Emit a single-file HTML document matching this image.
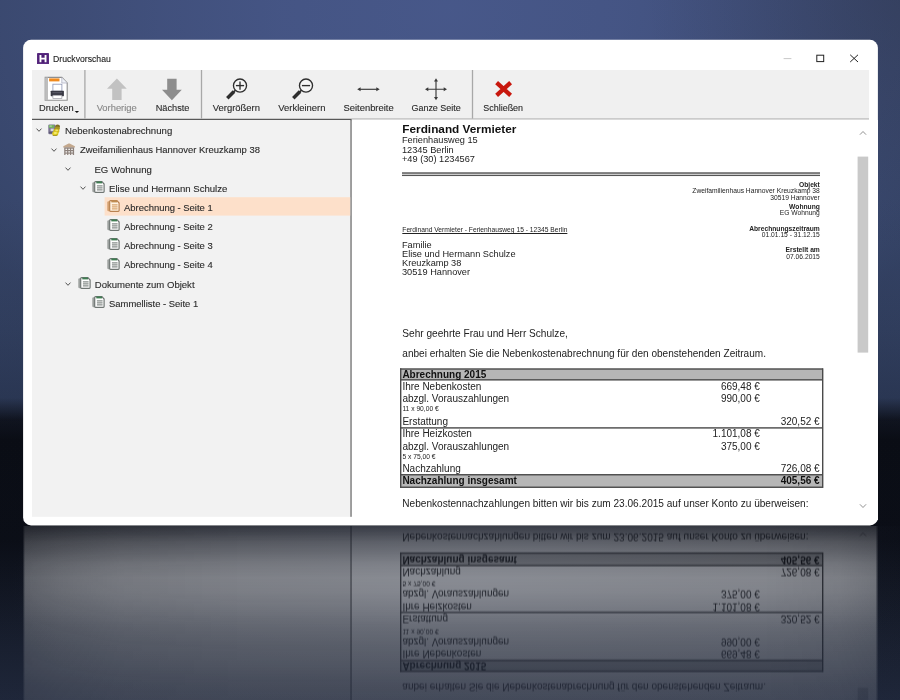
<!DOCTYPE html>
<html lang="de"><head><meta charset="utf-8"><title>Druckvorschau</title>
<style>
html,body{margin:0;padding:0}
body{width:900px;height:700px;overflow:hidden;background:#0a0c12;font-family:"Liberation Sans", sans-serif;font-size:0;line-height:0}
#stage{position:fixed;left:0;top:0;width:900px;height:700px;overflow:hidden;
 background:
  radial-gradient(circle 260px at 905px -10px, rgba(40,44,58,.30), rgba(40,44,58,0) 100%),
  radial-gradient(ellipse 560px 430px at 450px 10px, rgba(92,112,180,.48) 0%, rgba(92,112,180,.42) 30%, rgba(92,112,180,.33) 50%, rgba(92,112,180,.23) 68%, rgba(92,112,180,.14) 86%, rgba(92,112,180,.06) 100%),
  linear-gradient(180deg,#344162 0px,#334162 200px,#2d3a57 330px,#27334d 398px,#0b0e16 420px,#05070b 440px,#06080d 540px,#151b28 650px,#1b2232 700px)}
.a{position:absolute}
.t{position:absolute;white-space:nowrap;font-family:"Liberation Sans", sans-serif}
.layer{position:absolute;left:0;top:0;width:900px;height:700px;will-change:transform}
#floor{position:absolute;left:0;top:526px;width:900px;height:174px;
 background:radial-gradient(ellipse 470px 200px at 480px 60px, rgba(38,44,60,.65), rgba(38,44,60,0) 100%)}
#reflwrap{position:absolute;left:0;top:525.6px;width:900px;height:174.4px;overflow:hidden;
 -webkit-mask-image:linear-gradient(180deg,rgba(0,0,0,.15) 0px,rgba(0,0,0,.22) 8px,rgba(0,0,0,.30) 16px,rgba(0,0,0,.36) 26px,rgba(0,0,0,.435) 38px,rgba(0,0,0,.475) 52px,rgba(0,0,0,.455) 66px,rgba(0,0,0,.405) 82px,rgba(0,0,0,.335) 100px,rgba(0,0,0,.28) 120px,rgba(0,0,0,.236) 140px,rgba(0,0,0,.19) 158px,rgba(0,0,0,.155) 175px),linear-gradient(90deg,transparent 22.5px,rgba(0,0,0,.74) 25px,rgba(0,0,0,.84) 60px,rgba(0,0,0,.94) 120px,#000 250px,#000 760px,rgba(0,0,0,.93) 840px,rgba(0,0,0,.84) 875.5px,transparent 878.5px);-webkit-mask-composite:source-in;
 mask-image:linear-gradient(180deg,rgba(0,0,0,.15) 0px,rgba(0,0,0,.22) 8px,rgba(0,0,0,.30) 16px,rgba(0,0,0,.36) 26px,rgba(0,0,0,.435) 38px,rgba(0,0,0,.475) 52px,rgba(0,0,0,.455) 66px,rgba(0,0,0,.405) 82px,rgba(0,0,0,.335) 100px,rgba(0,0,0,.28) 120px,rgba(0,0,0,.236) 140px,rgba(0,0,0,.19) 158px,rgba(0,0,0,.155) 175px),linear-gradient(90deg,transparent 22.5px,rgba(0,0,0,.74) 25px,rgba(0,0,0,.84) 60px,rgba(0,0,0,.94) 120px,#000 250px,#000 760px,rgba(0,0,0,.93) 840px,rgba(0,0,0,.84) 875.5px,transparent 878.5px);mask-composite:intersect}
#refl{position:absolute;left:0;top:-525.6px;width:900px;height:700px;transform-origin:0 520.2px;transform:scaleY(-1);filter:blur(.35px)}
</style></head>
<body>
<div id="stage">
<div id="floor"></div>
<div id="reflwrap"><div id="refl">
<svg class="a" style="left:22px;top:38px" width="857" height="489" viewBox="22 38 857 489"><rect x="23.10" y="39.80" width="854.80" height="485.60" rx="8" fill="#f1f1f1"/></svg>
<svg class="a" style="left:350px;top:119px" width="529" height="402" viewBox="350 119 529 402"><rect x="351.80" y="120.00" width="526.20" height="400.00" fill="#fff"/></svg>
<svg class="a" style="left:36.6px;top:52.8px" width="12" height="11.2" viewBox="0 0 12 11.2"><rect width="12" height="11.2" rx="1" fill="#4b1d73"/><rect x="0.8" y="0.8" width="10.4" height="9.6" rx="0.6" fill="none" stroke="#6a3c92" stroke-width="0.7"/><path d="M3.45 2.1 V9.2 M8.55 2.1 V9.2 M3.45 5.6 H8.55" stroke="#fff" stroke-width="1.9" fill="none"/></svg>
<div class="t" style="left:52.60px;top:53px;font-size:9.4px;line-height:12px;color:#1b1b1b;font-weight:normal;transform:scaleX(0.925);transform-origin:0 0;-webkit-text-stroke:0.12px currentColor;">Druckvorschau</div>
<svg class="a" style="left:780px;top:50px" width="84" height="16" viewBox="780 50 84 16"><path d="M783.6 58.6 H791.4" stroke="#c8c8c8" stroke-width="1"/><rect x="816.8" y="55.2" width="6.9" height="6.4" fill="none" stroke="#222" stroke-width="1"/><path d="M850.2 54.8 L858 62 M858 54.8 L850.2 62" stroke="#222" stroke-width="1" fill="none"/></svg>
<svg class="a" style="left:31px;top:69px" width="839" height="51" viewBox="31 69 839 51"><rect x="32.00" y="70.00" width="837.00" height="49.00" fill="#f0f0f0"/></svg>
<svg class="a" style="left:31px;top:117px" width="839" height="4" viewBox="31 117 839 4"><rect x="32.00" y="118.40" width="837.00" height="1.10" fill="#b4b4b4"/></svg>
<svg class="a" style="left:31px;top:118px" width="322" height="4" viewBox="31 118 322 4"><rect x="32.00" y="119.10" width="319.60" height="1.20" fill="#4a4a4a"/></svg>
<svg class="a" style="left:83px;top:69px" width="4" height="51" viewBox="83 69 4 51"><rect x="84.25" y="70.00" width="1.30" height="48.60" fill="#a8a8a8"/></svg>
<svg class="a" style="left:199px;top:69px" width="5" height="51" viewBox="199 69 5 51"><rect x="200.85" y="70.00" width="1.30" height="48.60" fill="#a8a8a8"/></svg>
<svg class="a" style="left:470px;top:69px" width="5" height="51" viewBox="470 69 5 51"><rect x="471.85" y="70.00" width="1.30" height="48.60" fill="#a8a8a8"/></svg>
<svg class="a" style="left:44px;top:76px" width="25" height="26" viewBox="44 76 25 26"><path d="M45.2 77.4 H61.8 L67.2 83 V100.2 H45.2 Z" fill="#fff" stroke="#8e8e8e" stroke-width="1.1"/><rect x="45.2" y="77.4" width="2.8" height="22.8" fill="#bdbdbd"/><path d="M61.8 77.4 V83 H67.2" fill="#eef1f8" stroke="#aab" stroke-width="0.7"/><rect x="49.1" y="78.4" width="10.4" height="3" fill="#f18a1d"/><rect x="52.9" y="84.2" width="9" height="7" fill="#fff" stroke="#8c95b5" stroke-width="0.8"/><rect x="50.7" y="90.7" width="13.2" height="5.5" rx="0.6" fill="#383843"/><rect x="52.4" y="92.2" width="9.8" height="1" fill="#5c5c6a"/><rect x="52.9" y="95.2" width="9" height="3.2" fill="#fff" stroke="#8a8a95" stroke-width="0.6"/></svg>
<div class="t" style="left:39.10px;top:102px;font-size:9.25px;line-height:12px;color:#2a2a2a;font-weight:normal;-webkit-text-stroke:0.12px currentColor;">Drucken</div>
<svg class="a" style="left:74px;top:110px" width="6" height="4" viewBox="74 110 6 4"><path d="M74.7 110.9 H79.1 L76.9 113.1 Z" fill="#111"/></svg>
<svg class="a" style="left:105px;top:77px" width="80" height="25" viewBox="105 77 80 25"><path d="M116.9 78.6 L126.8 88.8 H121.6 V100 H112.2 V88.8 H107 Z" fill="#c2c2c2"/><path d="M171.9 100.2 L181.8 89.8 H176.6 V78.8 H167.2 V89.8 H162 Z" fill="#8d8d8d"/></svg>
<div class="t" style="left:-33.30px;width:300px;text-align:center;top:102px;font-size:9.4px;line-height:12px;color:#878787;font-weight:normal;-webkit-text-stroke:0.12px currentColor;">Vorherige</div>
<div class="t" style="left:22.60px;width:300px;text-align:center;top:102px;font-size:9.2px;line-height:12px;color:#2a2a2a;font-weight:normal;-webkit-text-stroke:0.12px currentColor;">Nächste</div>
<svg class="a" style="left:224.1px;top:76px" width="26" height="26" viewBox="224.1 76 26 26"><circle cx="240.1" cy="85.6" r="6.55" fill="#f6f6f6" stroke="#2e2e2e" stroke-width="1.35"/><path d="M236.0 85.6 H244.2" stroke="#2e2e2e" stroke-width="1.35"/><path d="M240.1 81.5 V89.7" stroke="#2e2e2e" stroke-width="1.35"/><path d="M235.5 90.2 L233.1 92.6" stroke="#2e2e2e" stroke-width="1.6"/><path d="M234.1 91.6 L227.4 98.3" stroke="#2e2e2e" stroke-width="3.5"/></svg>
<svg class="a" style="left:290.0px;top:76px" width="26" height="26" viewBox="290.0 76 26 26"><circle cx="306.0" cy="85.6" r="6.55" fill="#f6f6f6" stroke="#2e2e2e" stroke-width="1.35"/><path d="M301.9 85.6 H310.1" stroke="#2e2e2e" stroke-width="1.35"/><path d="M301.4 90.2 L299.0 92.6" stroke="#2e2e2e" stroke-width="1.6"/><path d="M300.0 91.6 L293.3 98.3" stroke="#2e2e2e" stroke-width="3.5"/></svg>
<div class="t" style="left:86.40px;width:300px;text-align:center;top:102px;font-size:9.45px;line-height:12px;color:#2a2a2a;font-weight:normal;-webkit-text-stroke:0.12px currentColor;">Vergrößern</div>
<div class="t" style="left:151.90px;width:300px;text-align:center;top:102px;font-size:9.45px;line-height:12px;color:#2a2a2a;font-weight:normal;-webkit-text-stroke:0.12px currentColor;">Verkleinern</div>
<svg class="a" style="left:355px;top:84px" width="27" height="11" viewBox="355 84 27 11"><path d="M359 89.3 H378" stroke="#3a3a3a" stroke-width="1.15"/><path d="M357.2 89.3 L360.6 87.3 V91.3 Z M379.7 89.3 L376.3 87.3 V91.3 Z" fill="#3a3a3a"/></svg>
<div class="t" style="left:218.60px;width:300px;text-align:center;top:102px;font-size:9.4px;line-height:12px;color:#2a2a2a;font-weight:normal;-webkit-text-stroke:0.12px currentColor;">Seitenbreite</div>
<svg class="a" style="left:423px;top:76px" width="26" height="26" viewBox="423 76 26 26"><path d="M427 89.2 H445 M436 80 V98.4" stroke="#3a3a3a" stroke-width="1.15"/><path d="M425 89.2 L428.3 87.2 V91.2 Z M447 89.2 L443.7 87.2 V91.2 Z M436 78.2 L438 81.5 H434 Z M436 100.2 L438 96.9 H434 Z" fill="#3a3a3a"/></svg>
<div class="t" style="left:286.10px;width:300px;text-align:center;top:103px;font-size:8.95px;line-height:11px;color:#2a2a2a;font-weight:normal;-webkit-text-stroke:0.12px currentColor;">Ganze Seite</div>
<svg class="a" style="left:493px;top:79px" width="21" height="20" viewBox="493 79 21 20"><path d="M496.6 82.6 L510.6 95.4 M510.6 82.6 L496.6 95.4" stroke="#c8170d" stroke-width="4.2" fill="none"/></svg>
<div class="t" style="left:353.20px;width:300px;text-align:center;top:103px;font-size:8.95px;line-height:11px;color:#2a2a2a;font-weight:normal;-webkit-text-stroke:0.12px currentColor;">Schließen</div>
<svg class="a" style="left:31px;top:119px" width="321" height="399" viewBox="31 119 321 399"><rect x="32.00" y="120.00" width="318.60" height="396.80" fill="#f2f2f2"/></svg>
<svg class="a" style="left:349px;top:119px" width="4" height="399" viewBox="349 119 4 399"><rect x="350.30" y="120.00" width="1.45" height="396.80" fill="#7c7c7c"/></svg>
<svg class="a" style="left:103px;top:196px" width="249" height="21" viewBox="103 196 249 21"><rect x="104.60" y="197.20" width="245.60" height="18.40" fill="#fde0ca"/></svg>
<svg class="a" style="left:35.20px;top:126.45px" width="8" height="8" viewBox="-4 -4 8 8"><path d="M-2.2 -1.1 L0 1.3 L2.2 -1.1" fill="none" stroke="#4c4c4c" stroke-width="0.95" stroke-linecap="round" stroke-linejoin="round"/></svg>
<svg class="a" style="left:48.4px;top:123.75px" width="12.4" height="12.4" viewBox="0 0 12.4 12.4"><rect x="0.3" y="0.6" width="7.2" height="9.6" rx="1.2" fill="#7b7592"/><rect x="0.9" y="1.0" width="5.2" height="3.0" rx="0.5" fill="#72b062"/><rect x="1.6" y="1.5" width="2.2" height="1.2" fill="#b5dca6"/><rect x="2.6" y="4.6" width="3.2" height="2.6" fill="#d9d7e2"/><rect x="0.9" y="7.8" width="4.6" height="1.6" fill="#5f5a75"/><ellipse cx="9.6" cy="2.4" rx="2.4" ry="1.9" fill="#7d6c22"/><ellipse cx="9.2" cy="4.6" rx="2.7" ry="2.0" fill="#a8941f"/><ellipse cx="8.4" cy="7.0" rx="3.0" ry="2.2" fill="#cdb61d"/><ellipse cx="7.3" cy="9.6" rx="3.1" ry="2.3" fill="#e2d024"/><ellipse cx="8.7" cy="6.3" rx="1.5" ry="0.9" fill="#f0e768"/><ellipse cx="7.4" cy="9.0" rx="1.6" ry="0.9" fill="#f4ec7a"/><path d="M4.6 11.2 Q7 12.6 9.6 10.9" stroke="#8a7a1c" stroke-width="0.8" fill="none"/></svg>
<div class="t" style="left:65.00px;top:125px;font-size:9.6px;line-height:12px;color:#2b2b2b;font-weight:normal;-webkit-text-stroke:0.12px currentColor;">Nebenkostenabrechnung</div>
<svg class="a" style="left:49.80px;top:145.60px" width="8" height="8" viewBox="-4 -4 8 8"><path d="M-2.2 -1.1 L0 1.3 L2.2 -1.1" fill="none" stroke="#4c4c4c" stroke-width="0.95" stroke-linecap="round" stroke-linejoin="round"/></svg>
<svg class="a" style="left:62.80px;top:142.60px" width="12.6" height="12.8" viewBox="0 0 12.6 12.8"><path d="M0.1 4.1 Q0.1 3.4 0.8 3.1 L5.6 0.5 Q6.1 0.25 6.6 0.5 L11.4 3.1 Q12.1 3.4 12.1 4.1 V4.5 H0.1 Z" fill="#c3a88d"/><rect x="1.2" y="4.4" width="9.9" height="8.1" fill="#8d827c"/><g fill="#f8f6f4"><rect x="2.5" y="5.7" width="1.6" height="1.3"/><rect x="5.35" y="5.7" width="1.6" height="1.3"/><rect x="8.2" y="5.7" width="1.6" height="1.3"/><rect x="2.5" y="8.2" width="1.6" height="1.3"/><rect x="5.35" y="8.2" width="1.6" height="1.3"/><rect x="8.2" y="8.2" width="1.6" height="1.3"/><rect x="2.5" y="10.7" width="1.6" height="1.3"/><rect x="5.35" y="10.7" width="1.6" height="1.3"/><rect x="8.2" y="10.7" width="1.6" height="1.3"/></g></svg>
<div class="t" style="left:80.00px;top:144px;font-size:9.45px;line-height:12px;color:#2b2b2b;font-weight:normal;-webkit-text-stroke:0.12px currentColor;">Zweifamilienhaus Hannover Kreuzkamp 38</div>
<svg class="a" style="left:64.40px;top:164.75px" width="8" height="8" viewBox="-4 -4 8 8"><path d="M-2.2 -1.1 L0 1.3 L2.2 -1.1" fill="none" stroke="#4c4c4c" stroke-width="0.95" stroke-linecap="round" stroke-linejoin="round"/></svg>
<div class="t" style="left:94.40px;top:164px;font-size:9.6px;line-height:12px;color:#2b2b2b;font-weight:normal;-webkit-text-stroke:0.12px currentColor;">EG Wohnung</div>
<svg class="a" style="left:79.00px;top:183.90px" width="8" height="8" viewBox="-4 -4 8 8"><path d="M-2.2 -1.1 L0 1.3 L2.2 -1.1" fill="none" stroke="#4c4c4c" stroke-width="0.95" stroke-linecap="round" stroke-linejoin="round"/></svg>
<svg class="a" style="left:92.30px;top:181.00px" width="13" height="12.5" viewBox="0 0 13 12.5"><rect x="0.3" y="1.2" width="3.4" height="10" rx="1.3" fill="#9da19f"/><path d="M2.7 1.5 Q2.7 0.7 3.5 0.7 L9.9 0.7 L12.1 3 L12.1 10.6 Q12.1 11.4 11.3 11.4 L3.5 11.4 Q2.7 11.4 2.7 10.6 Z" fill="#ffffff" stroke="#6f7673" stroke-width="1.2"/><rect x="4.3" y="0.5" width="5.7" height="1.9" fill="#3f7d52"/><path d="M4.9 4.9 H10.6 M4.9 6.9 H10.6 M4.9 8.9 H10.6" stroke="#878d8a" stroke-width="1.1"/></svg>
<div class="t" style="left:109.00px;top:183px;font-size:9.6px;line-height:12px;color:#2b2b2b;font-weight:normal;-webkit-text-stroke:0.12px currentColor;">Elise und Hermann Schulze</div>
<svg class="a" style="left:107.00px;top:200.15px" width="13" height="12.5" viewBox="0 0 13 12.5"><rect x="0.3" y="1.2" width="3.4" height="10" rx="1.3" fill="#d3a070"/><path d="M2.7 1.5 Q2.7 0.7 3.5 0.7 L9.9 0.7 L12.1 3 L12.1 10.6 Q12.1 11.4 11.3 11.4 L3.5 11.4 Q2.7 11.4 2.7 10.6 Z" fill="#fff3e3" stroke="#b98250" stroke-width="1.2"/><rect x="4.3" y="0.5" width="5.7" height="1.9" fill="#bf8d52"/><path d="M4.9 4.9 H10.6 M4.9 6.9 H10.6 M4.9 8.9 H10.6" stroke="#d9a772" stroke-width="1.1"/></svg>
<div class="t" style="left:124.00px;top:202px;font-size:9.45px;line-height:12px;color:#2b2b2b;font-weight:normal;-webkit-text-stroke:0.12px currentColor;">Abrechnung - Seite 1</div>
<svg class="a" style="left:107.00px;top:219.30px" width="13" height="12.5" viewBox="0 0 13 12.5"><rect x="0.3" y="1.2" width="3.4" height="10" rx="1.3" fill="#9da19f"/><path d="M2.7 1.5 Q2.7 0.7 3.5 0.7 L9.9 0.7 L12.1 3 L12.1 10.6 Q12.1 11.4 11.3 11.4 L3.5 11.4 Q2.7 11.4 2.7 10.6 Z" fill="#ffffff" stroke="#6f7673" stroke-width="1.2"/><rect x="4.3" y="0.5" width="5.7" height="1.9" fill="#3f7d52"/><path d="M4.9 4.9 H10.6 M4.9 6.9 H10.6 M4.9 8.9 H10.6" stroke="#878d8a" stroke-width="1.1"/></svg>
<div class="t" style="left:124.00px;top:221px;font-size:9.45px;line-height:12px;color:#2b2b2b;font-weight:normal;-webkit-text-stroke:0.12px currentColor;">Abrechnung - Seite 2</div>
<svg class="a" style="left:107.00px;top:238.45px" width="13" height="12.5" viewBox="0 0 13 12.5"><rect x="0.3" y="1.2" width="3.4" height="10" rx="1.3" fill="#9da19f"/><path d="M2.7 1.5 Q2.7 0.7 3.5 0.7 L9.9 0.7 L12.1 3 L12.1 10.6 Q12.1 11.4 11.3 11.4 L3.5 11.4 Q2.7 11.4 2.7 10.6 Z" fill="#ffffff" stroke="#6f7673" stroke-width="1.2"/><rect x="4.3" y="0.5" width="5.7" height="1.9" fill="#3f7d52"/><path d="M4.9 4.9 H10.6 M4.9 6.9 H10.6 M4.9 8.9 H10.6" stroke="#878d8a" stroke-width="1.1"/></svg>
<div class="t" style="left:124.00px;top:240px;font-size:9.45px;line-height:12px;color:#2b2b2b;font-weight:normal;-webkit-text-stroke:0.12px currentColor;">Abrechnung - Seite 3</div>
<svg class="a" style="left:107.00px;top:257.60px" width="13" height="12.5" viewBox="0 0 13 12.5"><rect x="0.3" y="1.2" width="3.4" height="10" rx="1.3" fill="#9da19f"/><path d="M2.7 1.5 Q2.7 0.7 3.5 0.7 L9.9 0.7 L12.1 3 L12.1 10.6 Q12.1 11.4 11.3 11.4 L3.5 11.4 Q2.7 11.4 2.7 10.6 Z" fill="#ffffff" stroke="#6f7673" stroke-width="1.2"/><rect x="4.3" y="0.5" width="5.7" height="1.9" fill="#3f7d52"/><path d="M4.9 4.9 H10.6 M4.9 6.9 H10.6 M4.9 8.9 H10.6" stroke="#878d8a" stroke-width="1.1"/></svg>
<div class="t" style="left:124.00px;top:259px;font-size:9.45px;line-height:12px;color:#2b2b2b;font-weight:normal;-webkit-text-stroke:0.12px currentColor;">Abrechnung - Seite 4</div>
<svg class="a" style="left:64.40px;top:279.65px" width="8" height="8" viewBox="-4 -4 8 8"><path d="M-2.2 -1.1 L0 1.3 L2.2 -1.1" fill="none" stroke="#4c4c4c" stroke-width="0.95" stroke-linecap="round" stroke-linejoin="round"/></svg>
<svg class="a" style="left:77.60px;top:276.75px" width="13" height="12.5" viewBox="0 0 13 12.5"><rect x="0.3" y="1.2" width="3.4" height="10" rx="1.3" fill="#9da19f"/><path d="M2.7 1.5 Q2.7 0.7 3.5 0.7 L9.9 0.7 L12.1 3 L12.1 10.6 Q12.1 11.4 11.3 11.4 L3.5 11.4 Q2.7 11.4 2.7 10.6 Z" fill="#ffffff" stroke="#6f7673" stroke-width="1.2"/><rect x="4.3" y="0.5" width="5.7" height="1.9" fill="#3f7d52"/><path d="M4.9 4.9 H10.6 M4.9 6.9 H10.6 M4.9 8.9 H10.6" stroke="#878d8a" stroke-width="1.1"/></svg>
<div class="t" style="left:94.80px;top:279px;font-size:9.55px;line-height:12px;color:#2b2b2b;font-weight:normal;-webkit-text-stroke:0.12px currentColor;">Dokumente zum Objekt</div>
<svg class="a" style="left:92.30px;top:295.90px" width="13" height="12.5" viewBox="0 0 13 12.5"><rect x="0.3" y="1.2" width="3.4" height="10" rx="1.3" fill="#9da19f"/><path d="M2.7 1.5 Q2.7 0.7 3.5 0.7 L9.9 0.7 L12.1 3 L12.1 10.6 Q12.1 11.4 11.3 11.4 L3.5 11.4 Q2.7 11.4 2.7 10.6 Z" fill="#ffffff" stroke="#6f7673" stroke-width="1.2"/><rect x="4.3" y="0.5" width="5.7" height="1.9" fill="#3f7d52"/><path d="M4.9 4.9 H10.6 M4.9 6.9 H10.6 M4.9 8.9 H10.6" stroke="#878d8a" stroke-width="1.1"/></svg>
<div class="t" style="left:109.00px;top:298px;font-size:9.45px;line-height:12px;color:#2b2b2b;font-weight:normal;-webkit-text-stroke:0.12px currentColor;">Sammelliste - Seite 1</div>
<div class="t" style="left:402.30px;top:122px;font-size:11.8px;line-height:15px;color:#111;font-weight:bold;">Ferdinand Vermieter</div>
<div class="t" style="left:402.30px;top:134px;font-size:9.7px;line-height:12px;color:#222;font-weight:normal;transform:scaleX(0.95);transform-origin:0 0;">Ferienhausweg 15</div>
<div class="t" style="left:402.30px;top:144px;font-size:9.7px;line-height:12px;color:#222;font-weight:normal;transform:scaleX(0.95);transform-origin:0 0;">12345 Berlin</div>
<div class="t" style="left:402.30px;top:153px;font-size:9.7px;line-height:12px;color:#222;font-weight:normal;transform:scaleX(0.95);transform-origin:0 0;">+49 (30) 1234567</div>
<svg class="a" style="left:401px;top:171px" width="420" height="4" viewBox="401 171 420 4"><rect x="402.00" y="172.10" width="418.00" height="1.90" fill="#7c7c7c"/></svg>
<svg class="a" style="left:401px;top:173px" width="420" height="5" viewBox="401 173 420 5"><rect x="402.00" y="174.70" width="418.00" height="1.35" fill="#555"/></svg>
<div class="t" style="right:80.20px;top:181px;font-size:6.7px;line-height:8px;color:#222;font-weight:bold;">Objekt</div>
<div class="t" style="right:80.20px;top:187px;font-size:6.7px;line-height:8px;color:#222;font-weight:normal;">Zweifamilienhaus Hannover Kreuzkamp 38</div>
<div class="t" style="right:80.20px;top:194px;font-size:6.7px;line-height:8px;color:#222;font-weight:normal;">30519 Hannover</div>
<div class="t" style="right:80.20px;top:203px;font-size:6.7px;line-height:8px;color:#222;font-weight:bold;">Wohnung</div>
<div class="t" style="right:80.20px;top:209px;font-size:6.7px;line-height:8px;color:#222;font-weight:normal;">EG Wohnung</div>
<div class="t" style="right:80.20px;top:225px;font-size:6.7px;line-height:8px;color:#222;font-weight:bold;">Abrechnungszeitraum</div>
<div class="t" style="right:80.20px;top:231px;font-size:6.7px;line-height:8px;color:#222;font-weight:normal;">01.01.15 - 31.12.15</div>
<div class="t" style="right:80.20px;top:246px;font-size:6.7px;line-height:8px;color:#222;font-weight:bold;">Erstellt am</div>
<div class="t" style="right:80.20px;top:253px;font-size:6.7px;line-height:8px;color:#222;font-weight:normal;">07.06.2015</div>
<div class="t" style="left:402.30px;top:226px;font-size:6.7px;line-height:8px;color:#222;font-weight:normal;text-decoration:underline;text-underline-offset:0.6px;text-decoration-thickness:0.7px;">Ferdinand Vermieter - Ferienhausweg 15 - 12345 Berlin</div>
<div class="t" style="left:402.30px;top:239px;font-size:9.7px;line-height:12px;color:#222;font-weight:normal;transform:scaleX(0.95);transform-origin:0 0;">Familie</div>
<div class="t" style="left:402.30px;top:248px;font-size:9.7px;line-height:12px;color:#222;font-weight:normal;transform:scaleX(0.95);transform-origin:0 0;">Elise und Hermann Schulze</div>
<div class="t" style="left:402.30px;top:257px;font-size:9.7px;line-height:12px;color:#222;font-weight:normal;transform:scaleX(0.95);transform-origin:0 0;">Kreuzkamp 38</div>
<div class="t" style="left:402.30px;top:266px;font-size:9.7px;line-height:12px;color:#222;font-weight:normal;transform:scaleX(0.95);transform-origin:0 0;">30519 Hannover</div>
<div class="t" style="left:402.30px;top:327px;font-size:10.1px;line-height:13px;color:#222;font-weight:normal;">Sehr geehrte Frau und Herr Schulze,</div>
<div class="t" style="left:402.30px;top:347px;font-size:10.05px;line-height:13px;color:#222;font-weight:normal;">anbei erhalten Sie die Nebenkostenabrechnung für den obenstehenden Zeitraum.</div>
<svg class="a" style="left:399px;top:367px" width="425" height="14" viewBox="399 367 425 14"><rect x="400.10" y="368.90" width="422.70" height="11.00" fill="#b6b6b6"/></svg>
<svg class="a" style="left:399px;top:473px" width="425" height="16" viewBox="399 473 425 16"><rect x="400.10" y="474.70" width="422.70" height="12.60" fill="#b6b6b6"/></svg>
<svg class="a" style="left:399px;top:367px" width="425" height="4" viewBox="399 367 425 4"><rect x="400.10" y="368.30" width="422.70" height="1.40" fill="#4a4a4a"/></svg>
<svg class="a" style="left:399px;top:378px" width="425" height="4" viewBox="399 378 425 4"><rect x="400.10" y="379.15" width="422.70" height="1.40" fill="#4a4a4a"/></svg>
<svg class="a" style="left:399px;top:426px" width="425" height="4" viewBox="399 426 425 4"><rect x="400.10" y="427.20" width="422.70" height="1.40" fill="#4a4a4a"/></svg>
<svg class="a" style="left:399px;top:473px" width="425" height="4" viewBox="399 473 425 4"><rect x="400.10" y="474.05" width="422.70" height="1.40" fill="#4a4a4a"/></svg>
<svg class="a" style="left:399px;top:485px" width="425" height="4" viewBox="399 485 425 4"><rect x="400.10" y="486.55" width="422.70" height="1.40" fill="#4a4a4a"/></svg>
<svg class="a" style="left:399px;top:367px" width="4" height="122" viewBox="399 367 4 122"><rect x="400.00" y="368.30" width="1.40" height="119.65" fill="#4a4a4a"/></svg>
<svg class="a" style="left:821px;top:367px" width="4" height="122" viewBox="821 367 4 122"><rect x="822.00" y="368.30" width="1.40" height="119.65" fill="#4a4a4a"/></svg>
<div class="t" style="left:402.40px;top:369px;font-size:10.0px;line-height:12px;color:#111;font-weight:bold;">Abrechnung 2015</div>
<div class="t" style="left:402.40px;top:381px;font-size:10.0px;line-height:12px;color:#222;font-weight:normal;">Ihre Nebenkosten</div>
<div class="t" style="left:402.40px;top:393px;font-size:10.0px;line-height:12px;color:#222;font-weight:normal;">abzgl. Vorauszahlungen</div>
<div class="t" style="left:402.40px;top:405px;font-size:6.7px;line-height:8px;color:#222;font-weight:normal;">11 x 90,00 €</div>
<div class="t" style="left:402.40px;top:416px;font-size:10.0px;line-height:12px;color:#222;font-weight:normal;">Erstattung</div>
<div class="t" style="left:402.40px;top:428px;font-size:10.0px;line-height:12px;color:#222;font-weight:normal;">Ihre Heizkosten</div>
<div class="t" style="left:402.40px;top:441px;font-size:10.0px;line-height:12px;color:#222;font-weight:normal;">abzgl. Vorauszahlungen</div>
<div class="t" style="left:402.40px;top:453px;font-size:6.7px;line-height:8px;color:#222;font-weight:normal;">5 x 75,00 €</div>
<div class="t" style="left:402.40px;top:463px;font-size:10.0px;line-height:12px;color:#222;font-weight:normal;">Nachzahlung</div>
<div class="t" style="left:402.40px;top:475px;font-size:10.0px;line-height:12px;color:#111;font-weight:bold;">Nachzahlung insgesamt</div>
<div class="t" style="right:140.20px;top:381px;font-size:10.0px;line-height:12px;color:#222;font-weight:normal;">669,48 €</div>
<div class="t" style="right:140.20px;top:393px;font-size:10.0px;line-height:12px;color:#222;font-weight:normal;">990,00 €</div>
<div class="t" style="right:80.40px;top:416px;font-size:10.0px;line-height:12px;color:#222;font-weight:normal;">320,52 €</div>
<div class="t" style="right:140.20px;top:428px;font-size:10.0px;line-height:12px;color:#222;font-weight:normal;">1.101,08 €</div>
<div class="t" style="right:140.20px;top:441px;font-size:10.0px;line-height:12px;color:#222;font-weight:normal;">375,00 €</div>
<div class="t" style="right:80.40px;top:463px;font-size:10.0px;line-height:12px;color:#222;font-weight:normal;">726,08 €</div>
<div class="t" style="right:80.40px;top:475px;font-size:10.0px;line-height:12px;color:#111;font-weight:bold;">405,56 €</div>
<div class="t" style="left:402.30px;top:497px;font-size:10.08px;line-height:13px;color:#222;font-weight:normal;">Nebenkostennachzahlungen bitten wir bis zum 23.06.2015 auf unser Konto zu überweisen:</div>
<svg class="a" style="left:856px;top:155px" width="14" height="199" viewBox="856 155 14 199"><rect x="857.60" y="156.60" width="10.60" height="196.00" fill="#c9c9c9"/></svg>
<svg class="a" style="left:859.00px;top:128.60px" width="8" height="8" viewBox="-4 -4 8 8"><path d="M-2.8 1.4 L0 -1.5 L2.8 1.4" fill="none" stroke="#8c8c8c" stroke-width="0.95" stroke-linecap="round" stroke-linejoin="round"/></svg>
<svg class="a" style="left:859.00px;top:502.40px" width="8" height="8" viewBox="-4 -4 8 8"><path d="M-2.8 -1.4 L0 1.5 L2.8 -1.4" fill="none" stroke="#8c8c8c" stroke-width="0.95" stroke-linecap="round" stroke-linejoin="round"/></svg>
</div></div>
<div class="layer" id="main">
<svg class="a" style="left:22px;top:38px" width="857" height="489" viewBox="22 38 857 489"><rect x="23.10" y="39.80" width="854.80" height="485.60" rx="8" fill="#fff"/></svg>
<svg class="a" style="left:350px;top:119px" width="529" height="402" viewBox="350 119 529 402"><rect x="351.80" y="120.00" width="526.20" height="400.00" fill="#fff"/></svg>
<svg class="a" style="left:36.6px;top:52.8px" width="12" height="11.2" viewBox="0 0 12 11.2"><rect width="12" height="11.2" rx="1" fill="#4b1d73"/><rect x="0.8" y="0.8" width="10.4" height="9.6" rx="0.6" fill="none" stroke="#6a3c92" stroke-width="0.7"/><path d="M3.45 2.1 V9.2 M8.55 2.1 V9.2 M3.45 5.6 H8.55" stroke="#fff" stroke-width="1.9" fill="none"/></svg>
<div class="t" style="left:52.60px;top:53px;font-size:9.4px;line-height:12px;color:#1b1b1b;font-weight:normal;transform:scaleX(0.925);transform-origin:0 0;-webkit-text-stroke:0.12px currentColor;">Druckvorschau</div>
<svg class="a" style="left:780px;top:50px" width="84" height="16" viewBox="780 50 84 16"><path d="M783.6 58.6 H791.4" stroke="#c8c8c8" stroke-width="1"/><rect x="816.8" y="55.2" width="6.9" height="6.4" fill="none" stroke="#222" stroke-width="1"/><path d="M850.2 54.8 L858 62 M858 54.8 L850.2 62" stroke="#222" stroke-width="1" fill="none"/></svg>
<svg class="a" style="left:31px;top:69px" width="839" height="51" viewBox="31 69 839 51"><rect x="32.00" y="70.00" width="837.00" height="49.00" fill="#f0f0f0"/></svg>
<svg class="a" style="left:31px;top:117px" width="839" height="4" viewBox="31 117 839 4"><rect x="32.00" y="118.40" width="837.00" height="1.10" fill="#b4b4b4"/></svg>
<svg class="a" style="left:31px;top:118px" width="322" height="4" viewBox="31 118 322 4"><rect x="32.00" y="119.10" width="319.60" height="1.20" fill="#4a4a4a"/></svg>
<svg class="a" style="left:83px;top:69px" width="4" height="51" viewBox="83 69 4 51"><rect x="84.25" y="70.00" width="1.30" height="48.60" fill="#a8a8a8"/></svg>
<svg class="a" style="left:199px;top:69px" width="5" height="51" viewBox="199 69 5 51"><rect x="200.85" y="70.00" width="1.30" height="48.60" fill="#a8a8a8"/></svg>
<svg class="a" style="left:470px;top:69px" width="5" height="51" viewBox="470 69 5 51"><rect x="471.85" y="70.00" width="1.30" height="48.60" fill="#a8a8a8"/></svg>
<svg class="a" style="left:44px;top:76px" width="25" height="26" viewBox="44 76 25 26"><path d="M45.2 77.4 H61.8 L67.2 83 V100.2 H45.2 Z" fill="#fff" stroke="#8e8e8e" stroke-width="1.1"/><rect x="45.2" y="77.4" width="2.8" height="22.8" fill="#bdbdbd"/><path d="M61.8 77.4 V83 H67.2" fill="#eef1f8" stroke="#aab" stroke-width="0.7"/><rect x="49.1" y="78.4" width="10.4" height="3" fill="#f18a1d"/><rect x="52.9" y="84.2" width="9" height="7" fill="#fff" stroke="#8c95b5" stroke-width="0.8"/><rect x="50.7" y="90.7" width="13.2" height="5.5" rx="0.6" fill="#383843"/><rect x="52.4" y="92.2" width="9.8" height="1" fill="#5c5c6a"/><rect x="52.9" y="95.2" width="9" height="3.2" fill="#fff" stroke="#8a8a95" stroke-width="0.6"/></svg>
<div class="t" style="left:39.10px;top:102px;font-size:9.25px;line-height:12px;color:#2a2a2a;font-weight:normal;-webkit-text-stroke:0.12px currentColor;">Drucken</div>
<svg class="a" style="left:74px;top:110px" width="6" height="4" viewBox="74 110 6 4"><path d="M74.7 110.9 H79.1 L76.9 113.1 Z" fill="#111"/></svg>
<svg class="a" style="left:105px;top:77px" width="80" height="25" viewBox="105 77 80 25"><path d="M116.9 78.6 L126.8 88.8 H121.6 V100 H112.2 V88.8 H107 Z" fill="#c2c2c2"/><path d="M171.9 100.2 L181.8 89.8 H176.6 V78.8 H167.2 V89.8 H162 Z" fill="#8d8d8d"/></svg>
<div class="t" style="left:-33.30px;width:300px;text-align:center;top:102px;font-size:9.4px;line-height:12px;color:#878787;font-weight:normal;-webkit-text-stroke:0.12px currentColor;">Vorherige</div>
<div class="t" style="left:22.60px;width:300px;text-align:center;top:102px;font-size:9.2px;line-height:12px;color:#2a2a2a;font-weight:normal;-webkit-text-stroke:0.12px currentColor;">Nächste</div>
<svg class="a" style="left:224.1px;top:76px" width="26" height="26" viewBox="224.1 76 26 26"><circle cx="240.1" cy="85.6" r="6.55" fill="#f6f6f6" stroke="#2e2e2e" stroke-width="1.35"/><path d="M236.0 85.6 H244.2" stroke="#2e2e2e" stroke-width="1.35"/><path d="M240.1 81.5 V89.7" stroke="#2e2e2e" stroke-width="1.35"/><path d="M235.5 90.2 L233.1 92.6" stroke="#2e2e2e" stroke-width="1.6"/><path d="M234.1 91.6 L227.4 98.3" stroke="#2e2e2e" stroke-width="3.5"/></svg>
<svg class="a" style="left:290.0px;top:76px" width="26" height="26" viewBox="290.0 76 26 26"><circle cx="306.0" cy="85.6" r="6.55" fill="#f6f6f6" stroke="#2e2e2e" stroke-width="1.35"/><path d="M301.9 85.6 H310.1" stroke="#2e2e2e" stroke-width="1.35"/><path d="M301.4 90.2 L299.0 92.6" stroke="#2e2e2e" stroke-width="1.6"/><path d="M300.0 91.6 L293.3 98.3" stroke="#2e2e2e" stroke-width="3.5"/></svg>
<div class="t" style="left:86.40px;width:300px;text-align:center;top:102px;font-size:9.45px;line-height:12px;color:#2a2a2a;font-weight:normal;-webkit-text-stroke:0.12px currentColor;">Vergrößern</div>
<div class="t" style="left:151.90px;width:300px;text-align:center;top:102px;font-size:9.45px;line-height:12px;color:#2a2a2a;font-weight:normal;-webkit-text-stroke:0.12px currentColor;">Verkleinern</div>
<svg class="a" style="left:355px;top:84px" width="27" height="11" viewBox="355 84 27 11"><path d="M359 89.3 H378" stroke="#3a3a3a" stroke-width="1.15"/><path d="M357.2 89.3 L360.6 87.3 V91.3 Z M379.7 89.3 L376.3 87.3 V91.3 Z" fill="#3a3a3a"/></svg>
<div class="t" style="left:218.60px;width:300px;text-align:center;top:102px;font-size:9.4px;line-height:12px;color:#2a2a2a;font-weight:normal;-webkit-text-stroke:0.12px currentColor;">Seitenbreite</div>
<svg class="a" style="left:423px;top:76px" width="26" height="26" viewBox="423 76 26 26"><path d="M427 89.2 H445 M436 80 V98.4" stroke="#3a3a3a" stroke-width="1.15"/><path d="M425 89.2 L428.3 87.2 V91.2 Z M447 89.2 L443.7 87.2 V91.2 Z M436 78.2 L438 81.5 H434 Z M436 100.2 L438 96.9 H434 Z" fill="#3a3a3a"/></svg>
<div class="t" style="left:286.10px;width:300px;text-align:center;top:103px;font-size:8.95px;line-height:11px;color:#2a2a2a;font-weight:normal;-webkit-text-stroke:0.12px currentColor;">Ganze Seite</div>
<svg class="a" style="left:493px;top:79px" width="21" height="20" viewBox="493 79 21 20"><path d="M496.6 82.6 L510.6 95.4 M510.6 82.6 L496.6 95.4" stroke="#c8170d" stroke-width="4.2" fill="none"/></svg>
<div class="t" style="left:353.20px;width:300px;text-align:center;top:103px;font-size:8.95px;line-height:11px;color:#2a2a2a;font-weight:normal;-webkit-text-stroke:0.12px currentColor;">Schließen</div>
<svg class="a" style="left:31px;top:119px" width="321" height="399" viewBox="31 119 321 399"><rect x="32.00" y="120.00" width="318.60" height="396.80" fill="#f2f2f2"/></svg>
<svg class="a" style="left:349px;top:119px" width="4" height="399" viewBox="349 119 4 399"><rect x="350.30" y="120.00" width="1.45" height="396.80" fill="#7c7c7c"/></svg>
<svg class="a" style="left:103px;top:196px" width="249" height="21" viewBox="103 196 249 21"><rect x="104.60" y="197.20" width="245.60" height="18.40" fill="#fde0ca"/></svg>
<svg class="a" style="left:35.20px;top:126.45px" width="8" height="8" viewBox="-4 -4 8 8"><path d="M-2.2 -1.1 L0 1.3 L2.2 -1.1" fill="none" stroke="#4c4c4c" stroke-width="0.95" stroke-linecap="round" stroke-linejoin="round"/></svg>
<svg class="a" style="left:48.4px;top:123.75px" width="12.4" height="12.4" viewBox="0 0 12.4 12.4"><rect x="0.3" y="0.6" width="7.2" height="9.6" rx="1.2" fill="#7b7592"/><rect x="0.9" y="1.0" width="5.2" height="3.0" rx="0.5" fill="#72b062"/><rect x="1.6" y="1.5" width="2.2" height="1.2" fill="#b5dca6"/><rect x="2.6" y="4.6" width="3.2" height="2.6" fill="#d9d7e2"/><rect x="0.9" y="7.8" width="4.6" height="1.6" fill="#5f5a75"/><ellipse cx="9.6" cy="2.4" rx="2.4" ry="1.9" fill="#7d6c22"/><ellipse cx="9.2" cy="4.6" rx="2.7" ry="2.0" fill="#a8941f"/><ellipse cx="8.4" cy="7.0" rx="3.0" ry="2.2" fill="#cdb61d"/><ellipse cx="7.3" cy="9.6" rx="3.1" ry="2.3" fill="#e2d024"/><ellipse cx="8.7" cy="6.3" rx="1.5" ry="0.9" fill="#f0e768"/><ellipse cx="7.4" cy="9.0" rx="1.6" ry="0.9" fill="#f4ec7a"/><path d="M4.6 11.2 Q7 12.6 9.6 10.9" stroke="#8a7a1c" stroke-width="0.8" fill="none"/></svg>
<div class="t" style="left:65.00px;top:125px;font-size:9.6px;line-height:12px;color:#2b2b2b;font-weight:normal;-webkit-text-stroke:0.12px currentColor;">Nebenkostenabrechnung</div>
<svg class="a" style="left:49.80px;top:145.60px" width="8" height="8" viewBox="-4 -4 8 8"><path d="M-2.2 -1.1 L0 1.3 L2.2 -1.1" fill="none" stroke="#4c4c4c" stroke-width="0.95" stroke-linecap="round" stroke-linejoin="round"/></svg>
<svg class="a" style="left:62.80px;top:142.60px" width="12.6" height="12.8" viewBox="0 0 12.6 12.8"><path d="M0.1 4.1 Q0.1 3.4 0.8 3.1 L5.6 0.5 Q6.1 0.25 6.6 0.5 L11.4 3.1 Q12.1 3.4 12.1 4.1 V4.5 H0.1 Z" fill="#c3a88d"/><rect x="1.2" y="4.4" width="9.9" height="8.1" fill="#8d827c"/><g fill="#f8f6f4"><rect x="2.5" y="5.7" width="1.6" height="1.3"/><rect x="5.35" y="5.7" width="1.6" height="1.3"/><rect x="8.2" y="5.7" width="1.6" height="1.3"/><rect x="2.5" y="8.2" width="1.6" height="1.3"/><rect x="5.35" y="8.2" width="1.6" height="1.3"/><rect x="8.2" y="8.2" width="1.6" height="1.3"/><rect x="2.5" y="10.7" width="1.6" height="1.3"/><rect x="5.35" y="10.7" width="1.6" height="1.3"/><rect x="8.2" y="10.7" width="1.6" height="1.3"/></g></svg>
<div class="t" style="left:80.00px;top:144px;font-size:9.45px;line-height:12px;color:#2b2b2b;font-weight:normal;-webkit-text-stroke:0.12px currentColor;">Zweifamilienhaus Hannover Kreuzkamp 38</div>
<svg class="a" style="left:64.40px;top:164.75px" width="8" height="8" viewBox="-4 -4 8 8"><path d="M-2.2 -1.1 L0 1.3 L2.2 -1.1" fill="none" stroke="#4c4c4c" stroke-width="0.95" stroke-linecap="round" stroke-linejoin="round"/></svg>
<div class="t" style="left:94.40px;top:164px;font-size:9.6px;line-height:12px;color:#2b2b2b;font-weight:normal;-webkit-text-stroke:0.12px currentColor;">EG Wohnung</div>
<svg class="a" style="left:79.00px;top:183.90px" width="8" height="8" viewBox="-4 -4 8 8"><path d="M-2.2 -1.1 L0 1.3 L2.2 -1.1" fill="none" stroke="#4c4c4c" stroke-width="0.95" stroke-linecap="round" stroke-linejoin="round"/></svg>
<svg class="a" style="left:92.30px;top:181.00px" width="13" height="12.5" viewBox="0 0 13 12.5"><rect x="0.3" y="1.2" width="3.4" height="10" rx="1.3" fill="#9da19f"/><path d="M2.7 1.5 Q2.7 0.7 3.5 0.7 L9.9 0.7 L12.1 3 L12.1 10.6 Q12.1 11.4 11.3 11.4 L3.5 11.4 Q2.7 11.4 2.7 10.6 Z" fill="#ffffff" stroke="#6f7673" stroke-width="1.2"/><rect x="4.3" y="0.5" width="5.7" height="1.9" fill="#3f7d52"/><path d="M4.9 4.9 H10.6 M4.9 6.9 H10.6 M4.9 8.9 H10.6" stroke="#878d8a" stroke-width="1.1"/></svg>
<div class="t" style="left:109.00px;top:183px;font-size:9.6px;line-height:12px;color:#2b2b2b;font-weight:normal;-webkit-text-stroke:0.12px currentColor;">Elise und Hermann Schulze</div>
<svg class="a" style="left:107.00px;top:200.15px" width="13" height="12.5" viewBox="0 0 13 12.5"><rect x="0.3" y="1.2" width="3.4" height="10" rx="1.3" fill="#d3a070"/><path d="M2.7 1.5 Q2.7 0.7 3.5 0.7 L9.9 0.7 L12.1 3 L12.1 10.6 Q12.1 11.4 11.3 11.4 L3.5 11.4 Q2.7 11.4 2.7 10.6 Z" fill="#fff3e3" stroke="#b98250" stroke-width="1.2"/><rect x="4.3" y="0.5" width="5.7" height="1.9" fill="#bf8d52"/><path d="M4.9 4.9 H10.6 M4.9 6.9 H10.6 M4.9 8.9 H10.6" stroke="#d9a772" stroke-width="1.1"/></svg>
<div class="t" style="left:124.00px;top:202px;font-size:9.45px;line-height:12px;color:#2b2b2b;font-weight:normal;-webkit-text-stroke:0.12px currentColor;">Abrechnung - Seite 1</div>
<svg class="a" style="left:107.00px;top:219.30px" width="13" height="12.5" viewBox="0 0 13 12.5"><rect x="0.3" y="1.2" width="3.4" height="10" rx="1.3" fill="#9da19f"/><path d="M2.7 1.5 Q2.7 0.7 3.5 0.7 L9.9 0.7 L12.1 3 L12.1 10.6 Q12.1 11.4 11.3 11.4 L3.5 11.4 Q2.7 11.4 2.7 10.6 Z" fill="#ffffff" stroke="#6f7673" stroke-width="1.2"/><rect x="4.3" y="0.5" width="5.7" height="1.9" fill="#3f7d52"/><path d="M4.9 4.9 H10.6 M4.9 6.9 H10.6 M4.9 8.9 H10.6" stroke="#878d8a" stroke-width="1.1"/></svg>
<div class="t" style="left:124.00px;top:221px;font-size:9.45px;line-height:12px;color:#2b2b2b;font-weight:normal;-webkit-text-stroke:0.12px currentColor;">Abrechnung - Seite 2</div>
<svg class="a" style="left:107.00px;top:238.45px" width="13" height="12.5" viewBox="0 0 13 12.5"><rect x="0.3" y="1.2" width="3.4" height="10" rx="1.3" fill="#9da19f"/><path d="M2.7 1.5 Q2.7 0.7 3.5 0.7 L9.9 0.7 L12.1 3 L12.1 10.6 Q12.1 11.4 11.3 11.4 L3.5 11.4 Q2.7 11.4 2.7 10.6 Z" fill="#ffffff" stroke="#6f7673" stroke-width="1.2"/><rect x="4.3" y="0.5" width="5.7" height="1.9" fill="#3f7d52"/><path d="M4.9 4.9 H10.6 M4.9 6.9 H10.6 M4.9 8.9 H10.6" stroke="#878d8a" stroke-width="1.1"/></svg>
<div class="t" style="left:124.00px;top:240px;font-size:9.45px;line-height:12px;color:#2b2b2b;font-weight:normal;-webkit-text-stroke:0.12px currentColor;">Abrechnung - Seite 3</div>
<svg class="a" style="left:107.00px;top:257.60px" width="13" height="12.5" viewBox="0 0 13 12.5"><rect x="0.3" y="1.2" width="3.4" height="10" rx="1.3" fill="#9da19f"/><path d="M2.7 1.5 Q2.7 0.7 3.5 0.7 L9.9 0.7 L12.1 3 L12.1 10.6 Q12.1 11.4 11.3 11.4 L3.5 11.4 Q2.7 11.4 2.7 10.6 Z" fill="#ffffff" stroke="#6f7673" stroke-width="1.2"/><rect x="4.3" y="0.5" width="5.7" height="1.9" fill="#3f7d52"/><path d="M4.9 4.9 H10.6 M4.9 6.9 H10.6 M4.9 8.9 H10.6" stroke="#878d8a" stroke-width="1.1"/></svg>
<div class="t" style="left:124.00px;top:259px;font-size:9.45px;line-height:12px;color:#2b2b2b;font-weight:normal;-webkit-text-stroke:0.12px currentColor;">Abrechnung - Seite 4</div>
<svg class="a" style="left:64.40px;top:279.65px" width="8" height="8" viewBox="-4 -4 8 8"><path d="M-2.2 -1.1 L0 1.3 L2.2 -1.1" fill="none" stroke="#4c4c4c" stroke-width="0.95" stroke-linecap="round" stroke-linejoin="round"/></svg>
<svg class="a" style="left:77.60px;top:276.75px" width="13" height="12.5" viewBox="0 0 13 12.5"><rect x="0.3" y="1.2" width="3.4" height="10" rx="1.3" fill="#9da19f"/><path d="M2.7 1.5 Q2.7 0.7 3.5 0.7 L9.9 0.7 L12.1 3 L12.1 10.6 Q12.1 11.4 11.3 11.4 L3.5 11.4 Q2.7 11.4 2.7 10.6 Z" fill="#ffffff" stroke="#6f7673" stroke-width="1.2"/><rect x="4.3" y="0.5" width="5.7" height="1.9" fill="#3f7d52"/><path d="M4.9 4.9 H10.6 M4.9 6.9 H10.6 M4.9 8.9 H10.6" stroke="#878d8a" stroke-width="1.1"/></svg>
<div class="t" style="left:94.80px;top:279px;font-size:9.55px;line-height:12px;color:#2b2b2b;font-weight:normal;-webkit-text-stroke:0.12px currentColor;">Dokumente zum Objekt</div>
<svg class="a" style="left:92.30px;top:295.90px" width="13" height="12.5" viewBox="0 0 13 12.5"><rect x="0.3" y="1.2" width="3.4" height="10" rx="1.3" fill="#9da19f"/><path d="M2.7 1.5 Q2.7 0.7 3.5 0.7 L9.9 0.7 L12.1 3 L12.1 10.6 Q12.1 11.4 11.3 11.4 L3.5 11.4 Q2.7 11.4 2.7 10.6 Z" fill="#ffffff" stroke="#6f7673" stroke-width="1.2"/><rect x="4.3" y="0.5" width="5.7" height="1.9" fill="#3f7d52"/><path d="M4.9 4.9 H10.6 M4.9 6.9 H10.6 M4.9 8.9 H10.6" stroke="#878d8a" stroke-width="1.1"/></svg>
<div class="t" style="left:109.00px;top:298px;font-size:9.45px;line-height:12px;color:#2b2b2b;font-weight:normal;-webkit-text-stroke:0.12px currentColor;">Sammelliste - Seite 1</div>
<div class="t" style="left:402.30px;top:122px;font-size:11.8px;line-height:15px;color:#111;font-weight:bold;">Ferdinand Vermieter</div>
<div class="t" style="left:402.30px;top:134px;font-size:9.7px;line-height:12px;color:#222;font-weight:normal;transform:scaleX(0.95);transform-origin:0 0;">Ferienhausweg 15</div>
<div class="t" style="left:402.30px;top:144px;font-size:9.7px;line-height:12px;color:#222;font-weight:normal;transform:scaleX(0.95);transform-origin:0 0;">12345 Berlin</div>
<div class="t" style="left:402.30px;top:153px;font-size:9.7px;line-height:12px;color:#222;font-weight:normal;transform:scaleX(0.95);transform-origin:0 0;">+49 (30) 1234567</div>
<svg class="a" style="left:401px;top:171px" width="420" height="4" viewBox="401 171 420 4"><rect x="402.00" y="172.10" width="418.00" height="1.90" fill="#7c7c7c"/></svg>
<svg class="a" style="left:401px;top:173px" width="420" height="5" viewBox="401 173 420 5"><rect x="402.00" y="174.70" width="418.00" height="1.35" fill="#555"/></svg>
<div class="t" style="right:80.20px;top:181px;font-size:6.7px;line-height:8px;color:#222;font-weight:bold;">Objekt</div>
<div class="t" style="right:80.20px;top:187px;font-size:6.7px;line-height:8px;color:#222;font-weight:normal;">Zweifamilienhaus Hannover Kreuzkamp 38</div>
<div class="t" style="right:80.20px;top:194px;font-size:6.7px;line-height:8px;color:#222;font-weight:normal;">30519 Hannover</div>
<div class="t" style="right:80.20px;top:203px;font-size:6.7px;line-height:8px;color:#222;font-weight:bold;">Wohnung</div>
<div class="t" style="right:80.20px;top:209px;font-size:6.7px;line-height:8px;color:#222;font-weight:normal;">EG Wohnung</div>
<div class="t" style="right:80.20px;top:225px;font-size:6.7px;line-height:8px;color:#222;font-weight:bold;">Abrechnungszeitraum</div>
<div class="t" style="right:80.20px;top:231px;font-size:6.7px;line-height:8px;color:#222;font-weight:normal;">01.01.15 - 31.12.15</div>
<div class="t" style="right:80.20px;top:246px;font-size:6.7px;line-height:8px;color:#222;font-weight:bold;">Erstellt am</div>
<div class="t" style="right:80.20px;top:253px;font-size:6.7px;line-height:8px;color:#222;font-weight:normal;">07.06.2015</div>
<div class="t" style="left:402.30px;top:226px;font-size:6.7px;line-height:8px;color:#222;font-weight:normal;text-decoration:underline;text-underline-offset:0.6px;text-decoration-thickness:0.7px;">Ferdinand Vermieter - Ferienhausweg 15 - 12345 Berlin</div>
<div class="t" style="left:402.30px;top:239px;font-size:9.7px;line-height:12px;color:#222;font-weight:normal;transform:scaleX(0.95);transform-origin:0 0;">Familie</div>
<div class="t" style="left:402.30px;top:248px;font-size:9.7px;line-height:12px;color:#222;font-weight:normal;transform:scaleX(0.95);transform-origin:0 0;">Elise und Hermann Schulze</div>
<div class="t" style="left:402.30px;top:257px;font-size:9.7px;line-height:12px;color:#222;font-weight:normal;transform:scaleX(0.95);transform-origin:0 0;">Kreuzkamp 38</div>
<div class="t" style="left:402.30px;top:266px;font-size:9.7px;line-height:12px;color:#222;font-weight:normal;transform:scaleX(0.95);transform-origin:0 0;">30519 Hannover</div>
<div class="t" style="left:402.30px;top:327px;font-size:10.1px;line-height:13px;color:#222;font-weight:normal;">Sehr geehrte Frau und Herr Schulze,</div>
<div class="t" style="left:402.30px;top:347px;font-size:10.05px;line-height:13px;color:#222;font-weight:normal;">anbei erhalten Sie die Nebenkostenabrechnung für den obenstehenden Zeitraum.</div>
<svg class="a" style="left:399px;top:367px" width="425" height="14" viewBox="399 367 425 14"><rect x="400.10" y="368.90" width="422.70" height="11.00" fill="#b6b6b6"/></svg>
<svg class="a" style="left:399px;top:473px" width="425" height="16" viewBox="399 473 425 16"><rect x="400.10" y="474.70" width="422.70" height="12.60" fill="#b6b6b6"/></svg>
<svg class="a" style="left:399px;top:367px" width="425" height="4" viewBox="399 367 425 4"><rect x="400.10" y="368.30" width="422.70" height="1.40" fill="#4a4a4a"/></svg>
<svg class="a" style="left:399px;top:378px" width="425" height="4" viewBox="399 378 425 4"><rect x="400.10" y="379.15" width="422.70" height="1.40" fill="#4a4a4a"/></svg>
<svg class="a" style="left:399px;top:426px" width="425" height="4" viewBox="399 426 425 4"><rect x="400.10" y="427.20" width="422.70" height="1.40" fill="#4a4a4a"/></svg>
<svg class="a" style="left:399px;top:473px" width="425" height="4" viewBox="399 473 425 4"><rect x="400.10" y="474.05" width="422.70" height="1.40" fill="#4a4a4a"/></svg>
<svg class="a" style="left:399px;top:485px" width="425" height="4" viewBox="399 485 425 4"><rect x="400.10" y="486.55" width="422.70" height="1.40" fill="#4a4a4a"/></svg>
<svg class="a" style="left:399px;top:367px" width="4" height="122" viewBox="399 367 4 122"><rect x="400.00" y="368.30" width="1.40" height="119.65" fill="#4a4a4a"/></svg>
<svg class="a" style="left:821px;top:367px" width="4" height="122" viewBox="821 367 4 122"><rect x="822.00" y="368.30" width="1.40" height="119.65" fill="#4a4a4a"/></svg>
<div class="t" style="left:402.40px;top:369px;font-size:10.0px;line-height:12px;color:#111;font-weight:bold;">Abrechnung 2015</div>
<div class="t" style="left:402.40px;top:381px;font-size:10.0px;line-height:12px;color:#222;font-weight:normal;">Ihre Nebenkosten</div>
<div class="t" style="left:402.40px;top:393px;font-size:10.0px;line-height:12px;color:#222;font-weight:normal;">abzgl. Vorauszahlungen</div>
<div class="t" style="left:402.40px;top:405px;font-size:6.7px;line-height:8px;color:#222;font-weight:normal;">11 x 90,00 €</div>
<div class="t" style="left:402.40px;top:416px;font-size:10.0px;line-height:12px;color:#222;font-weight:normal;">Erstattung</div>
<div class="t" style="left:402.40px;top:428px;font-size:10.0px;line-height:12px;color:#222;font-weight:normal;">Ihre Heizkosten</div>
<div class="t" style="left:402.40px;top:441px;font-size:10.0px;line-height:12px;color:#222;font-weight:normal;">abzgl. Vorauszahlungen</div>
<div class="t" style="left:402.40px;top:453px;font-size:6.7px;line-height:8px;color:#222;font-weight:normal;">5 x 75,00 €</div>
<div class="t" style="left:402.40px;top:463px;font-size:10.0px;line-height:12px;color:#222;font-weight:normal;">Nachzahlung</div>
<div class="t" style="left:402.40px;top:475px;font-size:10.0px;line-height:12px;color:#111;font-weight:bold;">Nachzahlung insgesamt</div>
<div class="t" style="right:140.20px;top:381px;font-size:10.0px;line-height:12px;color:#222;font-weight:normal;">669,48 €</div>
<div class="t" style="right:140.20px;top:393px;font-size:10.0px;line-height:12px;color:#222;font-weight:normal;">990,00 €</div>
<div class="t" style="right:80.40px;top:416px;font-size:10.0px;line-height:12px;color:#222;font-weight:normal;">320,52 €</div>
<div class="t" style="right:140.20px;top:428px;font-size:10.0px;line-height:12px;color:#222;font-weight:normal;">1.101,08 €</div>
<div class="t" style="right:140.20px;top:441px;font-size:10.0px;line-height:12px;color:#222;font-weight:normal;">375,00 €</div>
<div class="t" style="right:80.40px;top:463px;font-size:10.0px;line-height:12px;color:#222;font-weight:normal;">726,08 €</div>
<div class="t" style="right:80.40px;top:475px;font-size:10.0px;line-height:12px;color:#111;font-weight:bold;">405,56 €</div>
<div class="t" style="left:402.30px;top:497px;font-size:10.08px;line-height:13px;color:#222;font-weight:normal;">Nebenkostennachzahlungen bitten wir bis zum 23.06.2015 auf unser Konto zu überweisen:</div>
<svg class="a" style="left:856px;top:155px" width="14" height="199" viewBox="856 155 14 199"><rect x="857.60" y="156.60" width="10.60" height="196.00" fill="#c9c9c9"/></svg>
<svg class="a" style="left:859.00px;top:128.60px" width="8" height="8" viewBox="-4 -4 8 8"><path d="M-2.8 1.4 L0 -1.5 L2.8 1.4" fill="none" stroke="#8c8c8c" stroke-width="0.95" stroke-linecap="round" stroke-linejoin="round"/></svg>
<svg class="a" style="left:859.00px;top:502.40px" width="8" height="8" viewBox="-4 -4 8 8"><path d="M-2.8 -1.4 L0 1.5 L2.8 -1.4" fill="none" stroke="#8c8c8c" stroke-width="0.95" stroke-linecap="round" stroke-linejoin="round"/></svg>
</div>
</div>
</body></html>
